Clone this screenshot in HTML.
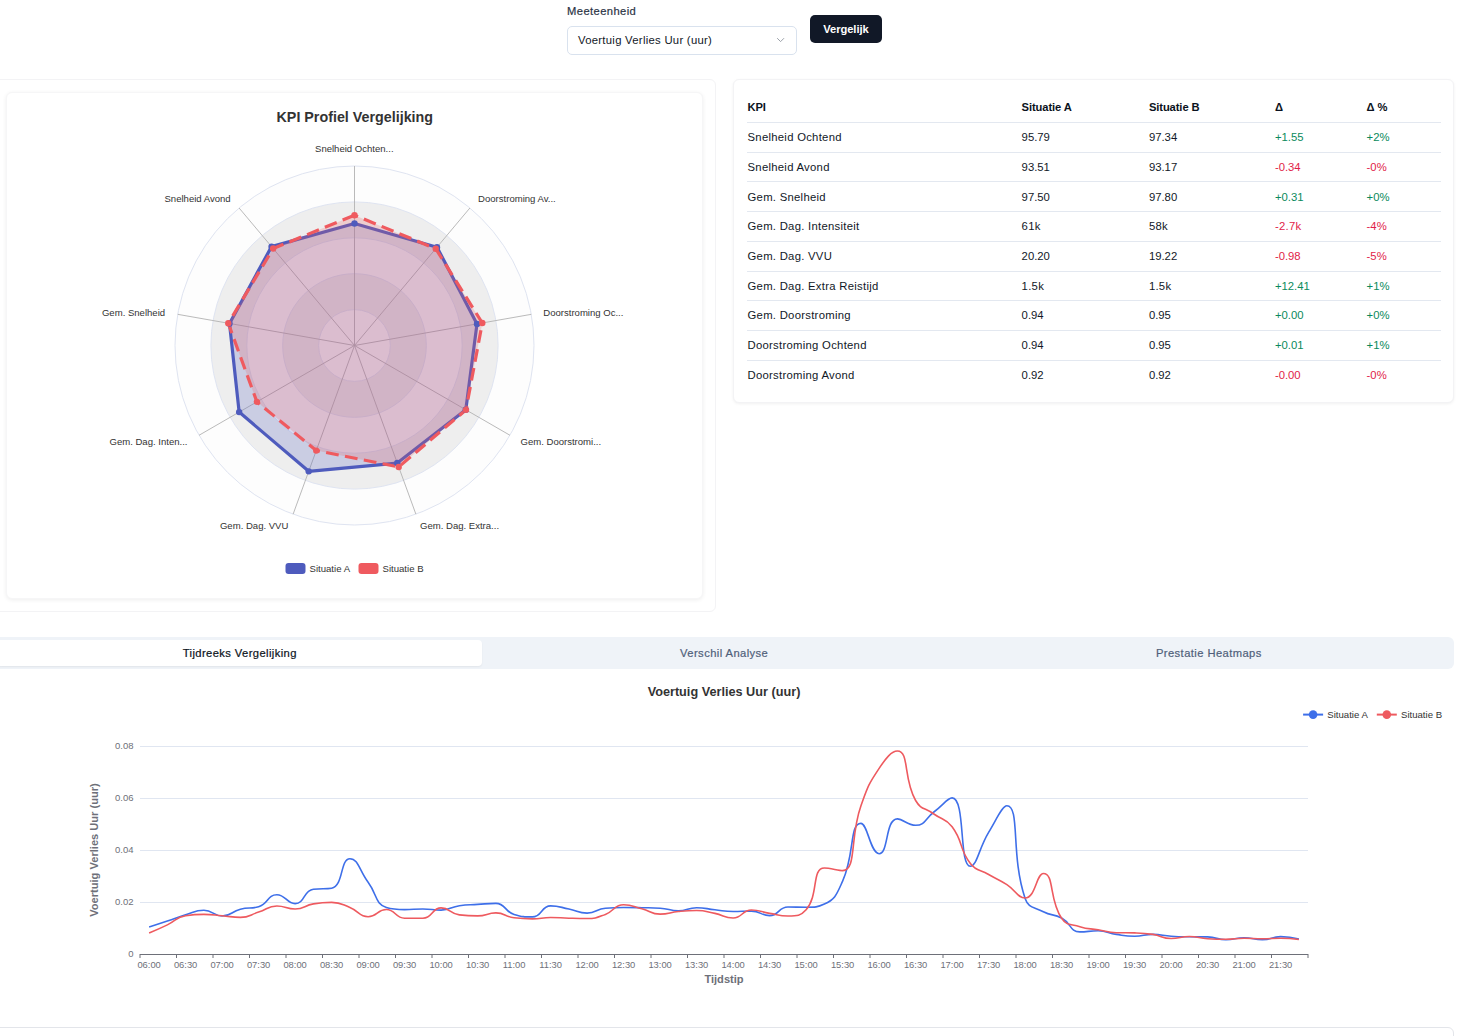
<!DOCTYPE html>
<html><head><meta charset="utf-8"><style>
html,body{margin:0;padding:0;}
body{width:1461px;height:1036px;overflow:hidden;position:relative;background:#fff;font-family:"Liberation Sans", sans-serif;}
.t{position:absolute;white-space:nowrap;line-height:1;}
svg text{font-family:"Liberation Sans", sans-serif;}
</style></head><body>
<div class="t" style="left:567.10px;top:6.02px;font-size:11.2px;color:#2b3445;font-weight:400;letter-spacing:0.4px;-webkit-text-stroke:0.2px #2b3445;">Meeteenheid</div>
<div style="position:absolute;left:567px;top:26px;width:230px;height:29px;box-sizing:border-box;border:1px solid #d9e2ee;border-radius:5px;background:#fff;"></div>
<div class="t" style="left:578.00px;top:34.93px;font-size:11.3px;color:#111827;font-weight:400;letter-spacing:0.28px;">Voertuig Verlies Uur (uur)</div>
<svg style="position:absolute;left:0;top:0" width="1461" height="60"><path d="M777.2 38.2 L780.6 41.6 L784 38.2" fill="none" stroke="#9aa0a8" stroke-width="1"/></svg>
<div style="position:absolute;left:810px;top:15px;width:72px;height:28px;box-sizing:border-box;background:#111827;border-radius:5px;"></div>
<div class="t" style="left:823.23px;top:24.12px;font-size:11.2px;color:#fff;font-weight:700;letter-spacing:-0.07px;">Vergelijk</div>
<div style="position:absolute;left:-6px;top:79px;width:722px;height:533px;box-sizing:border-box;border:1px solid #f3f3f5;border-radius:6px;background:#fff;"></div>
<div style="position:absolute;left:6px;top:92px;width:697px;height:507px;box-sizing:border-box;border:1px solid #f6f6f7;border-radius:6px;background:#fff;box-shadow:0 1px 4px rgba(0,0,0,0.07);"></div>
<div style="position:absolute;left:733px;top:79px;width:721px;height:324px;box-sizing:border-box;border:1px solid #f3f3f5;border-radius:6px;background:#fff;box-shadow:0 1px 3px rgba(0,0,0,0.06);"></div>
<div class="t" style="left:747.50px;top:102.22px;font-size:11.2px;color:#0b1220;font-weight:700;letter-spacing:-0.1px;">KPI</div>
<div class="t" style="left:1021.60px;top:102.22px;font-size:11.2px;color:#0b1220;font-weight:700;letter-spacing:-0.1px;">Situatie A</div>
<div class="t" style="left:1148.90px;top:102.22px;font-size:11.2px;color:#0b1220;font-weight:700;letter-spacing:-0.1px;">Situatie B</div>
<div class="t" style="left:1274.90px;top:102.22px;font-size:11.2px;color:#0b1220;font-weight:700;letter-spacing:-0.1px;">&Delta;</div>
<div class="t" style="left:1366.60px;top:102.22px;font-size:11.2px;color:#0b1220;font-weight:700;letter-spacing:-0.1px;">&Delta; %</div>
<div style="position:absolute;left:747px;top:122.00px;width:694px;height:1px;background:#e3e8f0"></div>
<div style="position:absolute;left:747px;top:151.74px;width:694px;height:1px;background:#e3e8f0"></div>
<div style="position:absolute;left:747px;top:181.48px;width:694px;height:1px;background:#e3e8f0"></div>
<div style="position:absolute;left:747px;top:211.22px;width:694px;height:1px;background:#e3e8f0"></div>
<div style="position:absolute;left:747px;top:240.96px;width:694px;height:1px;background:#e3e8f0"></div>
<div style="position:absolute;left:747px;top:270.70px;width:694px;height:1px;background:#e3e8f0"></div>
<div style="position:absolute;left:747px;top:300.44px;width:694px;height:1px;background:#e3e8f0"></div>
<div style="position:absolute;left:747px;top:330.18px;width:694px;height:1px;background:#e3e8f0"></div>
<div style="position:absolute;left:747px;top:359.92px;width:694px;height:1px;background:#e3e8f0"></div>
<div class="t" style="left:747.50px;top:132.03px;font-size:11.3px;color:#111827;font-weight:400;letter-spacing:0.28px;">Snelheid Ochtend</div>
<div class="t" style="left:1021.60px;top:132.03px;font-size:11.3px;color:#111827;font-weight:400;letter-spacing:0.0px;">95.79</div>
<div class="t" style="left:1148.90px;top:132.03px;font-size:11.3px;color:#111827;font-weight:400;letter-spacing:0.0px;">97.34</div>
<div class="t" style="left:1274.90px;top:132.03px;font-size:11.3px;color:#0a8a5c;font-weight:400;letter-spacing:0.0px;">+1.55</div>
<div class="t" style="left:1366.60px;top:132.03px;font-size:11.3px;color:#0a8a5c;font-weight:400;letter-spacing:0.0px;">+2%</div>
<div class="t" style="left:747.50px;top:161.77px;font-size:11.3px;color:#111827;font-weight:400;letter-spacing:0.28px;">Snelheid Avond</div>
<div class="t" style="left:1021.60px;top:161.77px;font-size:11.3px;color:#111827;font-weight:400;letter-spacing:0.0px;">93.51</div>
<div class="t" style="left:1148.90px;top:161.77px;font-size:11.3px;color:#111827;font-weight:400;letter-spacing:0.0px;">93.17</div>
<div class="t" style="left:1274.90px;top:161.77px;font-size:11.3px;color:#e11d48;font-weight:400;letter-spacing:0.0px;">-0.34</div>
<div class="t" style="left:1366.60px;top:161.77px;font-size:11.3px;color:#e11d48;font-weight:400;letter-spacing:0.0px;">-0%</div>
<div class="t" style="left:747.50px;top:191.51px;font-size:11.3px;color:#111827;font-weight:400;letter-spacing:0.28px;">Gem. Snelheid</div>
<div class="t" style="left:1021.60px;top:191.51px;font-size:11.3px;color:#111827;font-weight:400;letter-spacing:0.0px;">97.50</div>
<div class="t" style="left:1148.90px;top:191.51px;font-size:11.3px;color:#111827;font-weight:400;letter-spacing:0.0px;">97.80</div>
<div class="t" style="left:1274.90px;top:191.51px;font-size:11.3px;color:#0a8a5c;font-weight:400;letter-spacing:0.0px;">+0.31</div>
<div class="t" style="left:1366.60px;top:191.51px;font-size:11.3px;color:#0a8a5c;font-weight:400;letter-spacing:0.0px;">+0%</div>
<div class="t" style="left:747.50px;top:221.25px;font-size:11.3px;color:#111827;font-weight:400;letter-spacing:0.28px;">Gem. Dag. Intensiteit</div>
<div class="t" style="left:1021.60px;top:221.25px;font-size:11.3px;color:#111827;font-weight:400;letter-spacing:0.28px;">61k</div>
<div class="t" style="left:1148.90px;top:221.25px;font-size:11.3px;color:#111827;font-weight:400;letter-spacing:0.28px;">58k</div>
<div class="t" style="left:1274.90px;top:221.25px;font-size:11.3px;color:#e11d48;font-weight:400;letter-spacing:0.28px;">-2.7k</div>
<div class="t" style="left:1366.60px;top:221.25px;font-size:11.3px;color:#e11d48;font-weight:400;letter-spacing:0.0px;">-4%</div>
<div class="t" style="left:747.50px;top:250.99px;font-size:11.3px;color:#111827;font-weight:400;letter-spacing:0.28px;">Gem. Dag. VVU</div>
<div class="t" style="left:1021.60px;top:250.99px;font-size:11.3px;color:#111827;font-weight:400;letter-spacing:0.0px;">20.20</div>
<div class="t" style="left:1148.90px;top:250.99px;font-size:11.3px;color:#111827;font-weight:400;letter-spacing:0.0px;">19.22</div>
<div class="t" style="left:1274.90px;top:250.99px;font-size:11.3px;color:#e11d48;font-weight:400;letter-spacing:0.0px;">-0.98</div>
<div class="t" style="left:1366.60px;top:250.99px;font-size:11.3px;color:#e11d48;font-weight:400;letter-spacing:0.0px;">-5%</div>
<div class="t" style="left:747.50px;top:280.73px;font-size:11.3px;color:#111827;font-weight:400;letter-spacing:0.28px;">Gem. Dag. Extra Reistijd</div>
<div class="t" style="left:1021.60px;top:280.73px;font-size:11.3px;color:#111827;font-weight:400;letter-spacing:0.28px;">1.5k</div>
<div class="t" style="left:1148.90px;top:280.73px;font-size:11.3px;color:#111827;font-weight:400;letter-spacing:0.28px;">1.5k</div>
<div class="t" style="left:1274.90px;top:280.73px;font-size:11.3px;color:#0a8a5c;font-weight:400;letter-spacing:0.0px;">+12.41</div>
<div class="t" style="left:1366.60px;top:280.73px;font-size:11.3px;color:#0a8a5c;font-weight:400;letter-spacing:0.0px;">+1%</div>
<div class="t" style="left:747.50px;top:310.47px;font-size:11.3px;color:#111827;font-weight:400;letter-spacing:0.28px;">Gem. Doorstroming</div>
<div class="t" style="left:1021.60px;top:310.47px;font-size:11.3px;color:#111827;font-weight:400;letter-spacing:0.0px;">0.94</div>
<div class="t" style="left:1148.90px;top:310.47px;font-size:11.3px;color:#111827;font-weight:400;letter-spacing:0.0px;">0.95</div>
<div class="t" style="left:1274.90px;top:310.47px;font-size:11.3px;color:#0a8a5c;font-weight:400;letter-spacing:0.0px;">+0.00</div>
<div class="t" style="left:1366.60px;top:310.47px;font-size:11.3px;color:#0a8a5c;font-weight:400;letter-spacing:0.0px;">+0%</div>
<div class="t" style="left:747.50px;top:340.21px;font-size:11.3px;color:#111827;font-weight:400;letter-spacing:0.28px;">Doorstroming Ochtend</div>
<div class="t" style="left:1021.60px;top:340.21px;font-size:11.3px;color:#111827;font-weight:400;letter-spacing:0.0px;">0.94</div>
<div class="t" style="left:1148.90px;top:340.21px;font-size:11.3px;color:#111827;font-weight:400;letter-spacing:0.0px;">0.95</div>
<div class="t" style="left:1274.90px;top:340.21px;font-size:11.3px;color:#0a8a5c;font-weight:400;letter-spacing:0.0px;">+0.01</div>
<div class="t" style="left:1366.60px;top:340.21px;font-size:11.3px;color:#0a8a5c;font-weight:400;letter-spacing:0.0px;">+1%</div>
<div class="t" style="left:747.50px;top:369.95px;font-size:11.3px;color:#111827;font-weight:400;letter-spacing:0.28px;">Doorstroming Avond</div>
<div class="t" style="left:1021.60px;top:369.95px;font-size:11.3px;color:#111827;font-weight:400;letter-spacing:0.0px;">0.92</div>
<div class="t" style="left:1148.90px;top:369.95px;font-size:11.3px;color:#111827;font-weight:400;letter-spacing:0.0px;">0.92</div>
<div class="t" style="left:1274.90px;top:369.95px;font-size:11.3px;color:#e11d48;font-weight:400;letter-spacing:0.0px;">-0.00</div>
<div class="t" style="left:1366.60px;top:369.95px;font-size:11.3px;color:#e11d48;font-weight:400;letter-spacing:0.0px;">-0%</div>
<div style="position:absolute;left:-6px;top:637px;width:1460px;height:32px;box-sizing:border-box;background:#eff3f8;border-radius:6px;"></div>
<div style="position:absolute;left:-3px;top:640px;width:485px;height:26px;box-sizing:border-box;background:#fff;border-radius:4px;box-shadow:0 1px 2px rgba(0,0,0,0.06);"></div>
<div class="t" style="left:182.74px;top:648.22px;font-size:11.2px;color:#0b1220;font-weight:400;letter-spacing:0.4px;-webkit-text-stroke:0.2px #0b1220;">Tijdreeks Vergelijking</div>
<div class="t" style="left:680.07px;top:648.22px;font-size:11.2px;color:#4f5f7a;font-weight:400;letter-spacing:0.42px;-webkit-text-stroke:0.2px #4f5f7a;">Verschil Analyse</div>
<div class="t" style="left:1155.95px;top:648.22px;font-size:11.2px;color:#4f5f7a;font-weight:400;letter-spacing:0.42px;-webkit-text-stroke:0.2px #4f5f7a;">Prestatie Heatmaps</div>
<div style="position:absolute;left:-6px;top:1027px;width:1460px;height:73px;box-sizing:border-box;border:1px solid #e3e5ea;border-radius:6px;background:#fff;"></div>
<svg style="position:absolute;left:0;top:0" width="1461" height="1036">
<circle cx="354.5" cy="345.5" r="179.50" fill="#fdfdfd"/><circle cx="354.5" cy="345.5" r="143.60" fill="#eeeeee"/><circle cx="354.5" cy="345.5" r="107.70" fill="#fdfdfd"/><circle cx="354.5" cy="345.5" r="71.80" fill="#eeeeee"/><circle cx="354.5" cy="345.5" r="35.90" fill="#fdfdfd"/><circle cx="354.5" cy="345.5" r="35.90" fill="none" stroke="#dfe4f1" stroke-width="1"/><circle cx="354.5" cy="345.5" r="71.80" fill="none" stroke="#dfe4f1" stroke-width="1"/><circle cx="354.5" cy="345.5" r="107.70" fill="none" stroke="#dfe4f1" stroke-width="1"/><circle cx="354.5" cy="345.5" r="143.60" fill="none" stroke="#dfe4f1" stroke-width="1"/><circle cx="354.5" cy="345.5" r="179.50" fill="none" stroke="#dfe4f1" stroke-width="1"/><line x1="354.5" y1="345.5" x2="354.50" y2="166.00" stroke="#b2b2b2" stroke-width="0.9"/><line x1="354.5" y1="345.5" x2="239.12" y2="208.00" stroke="#b2b2b2" stroke-width="0.9"/><line x1="354.5" y1="345.5" x2="177.73" y2="314.33" stroke="#b2b2b2" stroke-width="0.9"/><line x1="354.5" y1="345.5" x2="199.05" y2="435.25" stroke="#b2b2b2" stroke-width="0.9"/><line x1="354.5" y1="345.5" x2="293.11" y2="514.17" stroke="#b2b2b2" stroke-width="0.9"/><line x1="354.5" y1="345.5" x2="415.89" y2="514.17" stroke="#b2b2b2" stroke-width="0.9"/><line x1="354.5" y1="345.5" x2="509.95" y2="435.25" stroke="#b2b2b2" stroke-width="0.9"/><line x1="354.5" y1="345.5" x2="531.27" y2="314.33" stroke="#b2b2b2" stroke-width="0.9"/><line x1="354.5" y1="345.5" x2="469.88" y2="208.00" stroke="#b2b2b2" stroke-width="0.9"/><polygon points="354.50,223.44 271.54,246.63 229.52,323.46 239.15,412.09 308.70,471.33 397.29,463.07 465.80,409.76 477.00,323.90 437.00,247.18" fill="#4e5bbd" fill-opacity="0.22" stroke="#4e5bbd" stroke-width="3.2" stroke-linejoin="round"/><polygon points="354.50,215.18 273.16,248.56 228.28,323.24 256.88,401.86 316.25,450.58 398.70,466.95 465.96,409.85 482.31,322.96 435.73,248.70" fill="#ef5a5f" fill-opacity="0.22" stroke="#ef5a5f" stroke-width="3.2" stroke-dasharray="12.8 6.4"/><circle cx="354.50" cy="223.44" r="3.2" fill="#4e5bbd"/><circle cx="271.54" cy="246.63" r="3.2" fill="#4e5bbd"/><circle cx="229.52" cy="323.46" r="3.2" fill="#4e5bbd"/><circle cx="239.15" cy="412.09" r="3.2" fill="#4e5bbd"/><circle cx="308.70" cy="471.33" r="3.2" fill="#4e5bbd"/><circle cx="397.29" cy="463.07" r="3.2" fill="#4e5bbd"/><circle cx="465.80" cy="409.76" r="3.2" fill="#4e5bbd"/><circle cx="477.00" cy="323.90" r="3.2" fill="#4e5bbd"/><circle cx="437.00" cy="247.18" r="3.2" fill="#4e5bbd"/><circle cx="354.50" cy="215.18" r="3.2" fill="#ef5a5f"/><circle cx="273.16" cy="248.56" r="3.2" fill="#ef5a5f"/><circle cx="228.28" cy="323.24" r="3.2" fill="#ef5a5f"/><circle cx="256.88" cy="401.86" r="3.2" fill="#ef5a5f"/><circle cx="316.25" cy="450.58" r="3.2" fill="#ef5a5f"/><circle cx="398.70" cy="466.95" r="3.2" fill="#ef5a5f"/><circle cx="465.96" cy="409.85" r="3.2" fill="#ef5a5f"/><circle cx="482.31" cy="322.96" r="3.2" fill="#ef5a5f"/><circle cx="435.73" cy="248.70" r="3.2" fill="#ef5a5f"/><text x="354.80" y="122.10" font-size="14.3" fill="#333" font-weight="700" text-anchor="middle" >KPI Profiel Vergelijking</text><text x="354.30" y="152.40" font-size="9.55" fill="#333" font-weight="400" text-anchor="middle" >Snelheid Ochten...</text><text x="230.70" y="202.00" font-size="9.55" fill="#333" font-weight="400" text-anchor="end" >Snelheid Avond</text><text x="165.10" y="315.70" font-size="9.55" fill="#333" font-weight="400" text-anchor="end" >Gem. Snelheid</text><text x="187.50" y="444.90" font-size="9.55" fill="#333" font-weight="400" text-anchor="end" >Gem. Dag. Inten...</text><text x="288.40" y="529.20" font-size="9.55" fill="#333" font-weight="400" text-anchor="end" >Gem. Dag. VVU</text><text x="420.00" y="529.20" font-size="9.55" fill="#333" font-weight="400" text-anchor="start" >Gem. Dag. Extra...</text><text x="520.50" y="444.90" font-size="9.55" fill="#333" font-weight="400" text-anchor="start" >Gem. Doorstromi...</text><text x="543.30" y="315.70" font-size="9.55" fill="#333" font-weight="400" text-anchor="start" >Doorstroming Oc...</text><text x="478.10" y="202.00" font-size="9.55" fill="#333" font-weight="400" text-anchor="start" >Doorstroming Av...</text><rect x="285.5" y="563" width="20" height="11" rx="3" fill="#4e5bbd"/><text x="309.50" y="572.00" font-size="9.6" fill="#333" font-weight="400" text-anchor="start" >Situatie A</text><rect x="358.5" y="563" width="20" height="11" rx="3" fill="#ef5a5f"/><text x="382.50" y="572.00" font-size="9.6" fill="#333" font-weight="400" text-anchor="start" >Situatie B</text>
<line x1="140.0" y1="902.5" x2="1308.0" y2="902.5" stroke="#e0e6f1" stroke-width="1"/><text x="133.5" y="905.40" font-size="9.5" fill="#6e7079" text-anchor="end">0.02</text><line x1="140.0" y1="850.5" x2="1308.0" y2="850.5" stroke="#e0e6f1" stroke-width="1"/><text x="133.5" y="853.40" font-size="9.5" fill="#6e7079" text-anchor="end">0.04</text><line x1="140.0" y1="798.5" x2="1308.0" y2="798.5" stroke="#e0e6f1" stroke-width="1"/><text x="133.5" y="801.40" font-size="9.5" fill="#6e7079" text-anchor="end">0.06</text><line x1="140.0" y1="746.5" x2="1308.0" y2="746.5" stroke="#e0e6f1" stroke-width="1"/><text x="133.5" y="749.40" font-size="9.5" fill="#6e7079" text-anchor="end">0.08</text><text x="133.5" y="957.40" font-size="9.5" fill="#6e7079" text-anchor="end">0</text><line x1="140.0" y1="954.5" x2="1308.0" y2="954.5" stroke="#6e7079" stroke-width="1"/><line x1="140.00" y1="954.0" x2="140.00" y2="958.0" stroke="#6e7079" stroke-width="1"/><line x1="176.50" y1="954.0" x2="176.50" y2="958.0" stroke="#6e7079" stroke-width="1"/><line x1="213.00" y1="954.0" x2="213.00" y2="958.0" stroke="#6e7079" stroke-width="1"/><line x1="249.50" y1="954.0" x2="249.50" y2="958.0" stroke="#6e7079" stroke-width="1"/><line x1="286.00" y1="954.0" x2="286.00" y2="958.0" stroke="#6e7079" stroke-width="1"/><line x1="322.50" y1="954.0" x2="322.50" y2="958.0" stroke="#6e7079" stroke-width="1"/><line x1="359.00" y1="954.0" x2="359.00" y2="958.0" stroke="#6e7079" stroke-width="1"/><line x1="395.50" y1="954.0" x2="395.50" y2="958.0" stroke="#6e7079" stroke-width="1"/><line x1="432.00" y1="954.0" x2="432.00" y2="958.0" stroke="#6e7079" stroke-width="1"/><line x1="468.50" y1="954.0" x2="468.50" y2="958.0" stroke="#6e7079" stroke-width="1"/><line x1="505.00" y1="954.0" x2="505.00" y2="958.0" stroke="#6e7079" stroke-width="1"/><line x1="541.50" y1="954.0" x2="541.50" y2="958.0" stroke="#6e7079" stroke-width="1"/><line x1="578.00" y1="954.0" x2="578.00" y2="958.0" stroke="#6e7079" stroke-width="1"/><line x1="614.50" y1="954.0" x2="614.50" y2="958.0" stroke="#6e7079" stroke-width="1"/><line x1="651.00" y1="954.0" x2="651.00" y2="958.0" stroke="#6e7079" stroke-width="1"/><line x1="687.50" y1="954.0" x2="687.50" y2="958.0" stroke="#6e7079" stroke-width="1"/><line x1="724.00" y1="954.0" x2="724.00" y2="958.0" stroke="#6e7079" stroke-width="1"/><line x1="760.50" y1="954.0" x2="760.50" y2="958.0" stroke="#6e7079" stroke-width="1"/><line x1="797.00" y1="954.0" x2="797.00" y2="958.0" stroke="#6e7079" stroke-width="1"/><line x1="833.50" y1="954.0" x2="833.50" y2="958.0" stroke="#6e7079" stroke-width="1"/><line x1="870.00" y1="954.0" x2="870.00" y2="958.0" stroke="#6e7079" stroke-width="1"/><line x1="906.50" y1="954.0" x2="906.50" y2="958.0" stroke="#6e7079" stroke-width="1"/><line x1="943.00" y1="954.0" x2="943.00" y2="958.0" stroke="#6e7079" stroke-width="1"/><line x1="979.50" y1="954.0" x2="979.50" y2="958.0" stroke="#6e7079" stroke-width="1"/><line x1="1016.00" y1="954.0" x2="1016.00" y2="958.0" stroke="#6e7079" stroke-width="1"/><line x1="1052.50" y1="954.0" x2="1052.50" y2="958.0" stroke="#6e7079" stroke-width="1"/><line x1="1089.00" y1="954.0" x2="1089.00" y2="958.0" stroke="#6e7079" stroke-width="1"/><line x1="1125.50" y1="954.0" x2="1125.50" y2="958.0" stroke="#6e7079" stroke-width="1"/><line x1="1162.00" y1="954.0" x2="1162.00" y2="958.0" stroke="#6e7079" stroke-width="1"/><line x1="1198.50" y1="954.0" x2="1198.50" y2="958.0" stroke="#6e7079" stroke-width="1"/><line x1="1235.00" y1="954.0" x2="1235.00" y2="958.0" stroke="#6e7079" stroke-width="1"/><line x1="1271.50" y1="954.0" x2="1271.50" y2="958.0" stroke="#6e7079" stroke-width="1"/><line x1="1308.00" y1="954.0" x2="1308.00" y2="958.0" stroke="#6e7079" stroke-width="1"/><text x="149.12" y="967.8" font-size="9.4" fill="#6e7079" text-anchor="middle">06:00</text><text x="185.62" y="967.8" font-size="9.4" fill="#6e7079" text-anchor="middle">06:30</text><text x="222.12" y="967.8" font-size="9.4" fill="#6e7079" text-anchor="middle">07:00</text><text x="258.62" y="967.8" font-size="9.4" fill="#6e7079" text-anchor="middle">07:30</text><text x="295.12" y="967.8" font-size="9.4" fill="#6e7079" text-anchor="middle">08:00</text><text x="331.62" y="967.8" font-size="9.4" fill="#6e7079" text-anchor="middle">08:30</text><text x="368.12" y="967.8" font-size="9.4" fill="#6e7079" text-anchor="middle">09:00</text><text x="404.62" y="967.8" font-size="9.4" fill="#6e7079" text-anchor="middle">09:30</text><text x="441.12" y="967.8" font-size="9.4" fill="#6e7079" text-anchor="middle">10:00</text><text x="477.62" y="967.8" font-size="9.4" fill="#6e7079" text-anchor="middle">10:30</text><text x="514.12" y="967.8" font-size="9.4" fill="#6e7079" text-anchor="middle">11:00</text><text x="550.62" y="967.8" font-size="9.4" fill="#6e7079" text-anchor="middle">11:30</text><text x="587.12" y="967.8" font-size="9.4" fill="#6e7079" text-anchor="middle">12:00</text><text x="623.62" y="967.8" font-size="9.4" fill="#6e7079" text-anchor="middle">12:30</text><text x="660.12" y="967.8" font-size="9.4" fill="#6e7079" text-anchor="middle">13:00</text><text x="696.62" y="967.8" font-size="9.4" fill="#6e7079" text-anchor="middle">13:30</text><text x="733.12" y="967.8" font-size="9.4" fill="#6e7079" text-anchor="middle">14:00</text><text x="769.62" y="967.8" font-size="9.4" fill="#6e7079" text-anchor="middle">14:30</text><text x="806.12" y="967.8" font-size="9.4" fill="#6e7079" text-anchor="middle">15:00</text><text x="842.62" y="967.8" font-size="9.4" fill="#6e7079" text-anchor="middle">15:30</text><text x="879.12" y="967.8" font-size="9.4" fill="#6e7079" text-anchor="middle">16:00</text><text x="915.62" y="967.8" font-size="9.4" fill="#6e7079" text-anchor="middle">16:30</text><text x="952.12" y="967.8" font-size="9.4" fill="#6e7079" text-anchor="middle">17:00</text><text x="988.62" y="967.8" font-size="9.4" fill="#6e7079" text-anchor="middle">17:30</text><text x="1025.12" y="967.8" font-size="9.4" fill="#6e7079" text-anchor="middle">18:00</text><text x="1061.62" y="967.8" font-size="9.4" fill="#6e7079" text-anchor="middle">18:30</text><text x="1098.12" y="967.8" font-size="9.4" fill="#6e7079" text-anchor="middle">19:00</text><text x="1134.62" y="967.8" font-size="9.4" fill="#6e7079" text-anchor="middle">19:30</text><text x="1171.12" y="967.8" font-size="9.4" fill="#6e7079" text-anchor="middle">20:00</text><text x="1207.62" y="967.8" font-size="9.4" fill="#6e7079" text-anchor="middle">20:30</text><text x="1244.12" y="967.8" font-size="9.4" fill="#6e7079" text-anchor="middle">21:00</text><text x="1280.62" y="967.8" font-size="9.4" fill="#6e7079" text-anchor="middle">21:30</text><path d="M149.12 927.00 C149.12 927.00 158.29 924.16 167.38 921.10 C176.54 918.01 176.36 917.44 185.62 914.70 C194.61 912.04 194.83 910.30 203.88 910.30 C213.08 910.30 213.08 916.00 222.12 916.00 C231.33 916.00 230.99 911.56 240.38 909.20 C249.24 906.96 250.29 909.20 258.62 906.80 C268.54 903.94 267.41 894.70 276.88 894.70 C285.66 894.70 286.62 903.60 295.12 903.60 C304.87 903.60 303.16 890.47 313.38 889.20 C321.41 888.20 325.33 889.20 331.62 888.20 C343.58 886.30 340.06 858.70 349.88 858.70 C358.31 858.70 359.19 870.36 368.12 882.30 C377.44 894.76 374.90 903.94 386.38 907.50 C393.15 909.60 395.47 909.60 404.62 909.60 C413.72 909.60 413.76 909.00 422.88 909.00 C432.01 909.00 432.12 910.10 441.12 910.10 C450.37 910.10 450.13 907.03 459.38 905.70 C468.38 904.40 468.50 904.98 477.62 904.40 C486.75 903.83 487.45 903.40 495.88 903.40 C505.70 903.40 504.34 911.51 514.12 914.40 C522.59 916.90 523.91 916.90 532.38 916.90 C542.16 916.90 540.86 905.90 550.62 905.90 C559.11 905.90 559.80 907.21 568.88 909.00 C578.05 910.81 578.05 913.10 587.12 913.10 C596.30 913.10 596.09 908.92 605.38 908.20 C614.34 907.50 614.50 907.50 623.62 907.50 C632.75 907.50 632.75 907.53 641.88 907.70 C651.00 907.88 651.04 907.70 660.12 908.20 C669.29 908.70 669.27 910.80 678.38 910.80 C687.52 910.80 687.47 907.70 696.62 907.70 C705.72 907.70 705.74 908.85 714.88 909.80 C723.99 910.75 723.98 911.50 733.12 911.50 C742.23 911.50 742.38 911.10 751.38 911.10 C760.63 911.10 760.82 915.60 769.62 915.60 C779.07 915.60 778.29 907.00 787.88 907.00 C796.54 907.00 797.07 907.30 806.12 907.30 C815.32 907.30 817.30 907.30 824.38 904.10 C835.55 899.04 836.68 894.34 842.62 881.20 C854.93 853.99 849.35 823.40 860.88 823.40 C867.60 823.40 870.48 853.70 879.12 853.70 C888.73 853.70 885.14 818.90 897.38 818.90 C903.39 818.90 907.21 825.30 915.62 825.30 C925.46 825.30 924.85 818.78 933.88 812.00 C943.10 805.08 947.64 797.90 952.12 797.90 C965.89 797.90 958.55 866.30 970.38 866.30 C976.80 866.30 978.70 848.86 988.62 832.40 C996.95 818.61 1002.23 805.80 1006.88 805.80 C1020.48 805.80 1010.41 855.65 1025.12 898.40 C1028.66 908.65 1033.52 906.51 1043.38 911.80 C1051.77 916.31 1053.29 913.41 1061.62 918.00 C1071.54 923.46 1069.72 931.90 1079.88 931.90 C1087.97 931.90 1089.08 930.80 1098.12 930.80 C1107.33 930.80 1107.19 933.04 1116.38 934.40 C1125.44 935.74 1125.50 936.20 1134.62 936.20 C1143.75 936.20 1143.75 934.40 1152.88 934.40 C1162.00 934.40 1161.98 935.60 1171.12 936.20 C1180.23 936.80 1180.25 936.70 1189.38 936.80 C1198.50 936.90 1198.56 936.80 1207.62 936.90 C1216.81 937.00 1216.72 939.80 1225.88 939.80 C1234.97 939.80 1235.00 937.80 1244.12 937.80 C1253.25 937.80 1253.29 939.80 1262.38 939.80 C1271.54 939.80 1271.47 936.60 1280.62 936.60 C1289.72 936.60 1298.88 939.10 1298.88 939.10" fill="none" stroke="#3e6fe9" stroke-width="1.6" stroke-linejoin="round"/><path d="M149.12 933.10 C149.12 933.10 158.35 929.20 167.38 924.90 C176.60 920.50 176.00 917.15 185.62 915.70 C194.25 914.40 194.75 914.40 203.88 914.40 C213.00 914.40 213.01 914.95 222.12 915.70 C231.26 916.45 231.41 917.40 240.38 917.40 C249.66 917.40 249.56 914.93 258.62 912.10 C267.81 909.23 267.57 906.00 276.88 906.00 C285.82 906.00 286.11 909.00 295.12 909.00 C304.36 909.00 304.09 905.45 313.38 903.90 C322.34 902.40 322.66 902.40 331.62 902.40 C340.91 902.40 341.09 904.06 349.88 907.50 C359.34 911.21 358.81 916.70 368.12 916.70 C377.06 916.70 377.39 909.50 386.38 909.50 C395.64 909.50 395.03 918.20 404.62 918.20 C413.28 918.20 414.38 918.20 422.88 918.20 C432.63 918.20 431.68 907.90 441.12 907.90 C449.93 907.90 449.94 913.83 459.38 914.90 C468.19 915.90 468.55 915.90 477.62 915.90 C486.80 915.90 486.85 912.90 495.88 912.90 C505.10 912.90 504.85 916.66 514.12 917.80 C523.10 918.90 523.26 918.90 532.38 918.90 C541.51 918.90 541.49 917.50 550.62 917.50 C559.74 917.50 559.75 917.95 568.88 918.20 C578.00 918.45 578.11 918.50 587.12 918.50 C596.36 918.50 596.69 917.66 605.38 914.40 C614.94 910.81 614.04 904.80 623.62 904.80 C632.29 904.80 632.84 906.40 641.88 908.70 C651.09 911.05 650.85 914.10 660.12 914.10 C669.10 914.10 669.21 912.40 678.38 911.50 C687.46 910.60 687.55 910.50 696.62 910.50 C705.80 910.50 705.83 911.54 714.88 913.40 C724.08 915.29 724.26 918.00 733.12 918.00 C742.51 918.00 741.93 910.00 751.38 910.00 C760.18 910.00 760.47 911.89 769.62 913.40 C778.72 914.89 778.95 916.00 787.88 916.00 C797.20 916.00 800.70 916.00 806.12 909.80 C818.95 895.13 811.38 868.00 824.38 868.00 C829.63 868.00 838.69 870.60 842.62 870.60 C856.94 870.60 849.63 837.49 860.88 806.00 C867.88 786.39 867.74 785.55 879.12 768.40 C885.99 758.05 891.47 751.00 897.38 751.00 C909.72 751.00 902.87 778.48 915.62 800.50 C921.12 809.98 924.67 807.37 933.88 814.00 C942.92 820.52 945.70 818.08 952.12 826.80 C963.95 842.83 958.37 847.81 970.38 863.50 C976.62 871.66 979.40 869.17 988.62 874.50 C997.65 879.72 998.12 878.97 1006.88 884.60 C1016.37 890.72 1017.36 898.00 1025.12 898.00 C1035.61 898.00 1036.31 873.50 1043.38 873.50 C1054.56 873.50 1048.73 899.51 1061.62 918.30 C1066.98 926.11 1070.38 923.71 1079.88 926.70 C1088.63 929.46 1088.99 928.30 1098.12 929.80 C1107.24 931.30 1107.19 932.50 1116.38 932.70 C1125.44 932.90 1125.52 932.70 1134.62 932.90 C1143.77 933.10 1143.85 933.01 1152.88 934.40 C1162.10 935.81 1161.91 938.50 1171.12 938.50 C1180.16 938.50 1180.26 936.50 1189.38 936.50 C1198.51 936.50 1198.47 938.30 1207.62 938.80 C1216.72 939.30 1216.76 939.30 1225.88 939.30 C1235.01 939.30 1234.99 938.30 1244.12 938.30 C1253.24 938.30 1253.25 938.80 1262.38 938.80 C1271.50 938.80 1271.51 938.30 1280.62 938.30 C1289.76 938.30 1298.88 939.50 1298.88 939.50" fill="none" stroke="#ee5a5f" stroke-width="1.6" stroke-linejoin="round"/><text x="724" y="696.1" font-size="12.7" font-weight="700" fill="#333" text-anchor="middle">Voertuig Verlies Uur (uur)</text><text x="724" y="983" font-size="11.1" font-weight="700" fill="#6e7079" text-anchor="middle">Tijdstip</text><text transform="translate(98.2,850) rotate(-90)" x="0" y="0" font-size="11.1" font-weight="700" fill="#6e7079" text-anchor="middle">Voertuig Verlies Uur (uur)</text><line x1="1303.1" y1="714.6" x2="1323.1" y2="714.6" stroke="#3e6fe9" stroke-width="2"/><circle cx="1313.1" cy="714.6" r="4.3" fill="#3e6fe9"/><text x="1327.3" y="717.8" font-size="9.6" fill="#333">Situatie A</text><line x1="1376.8" y1="714.6" x2="1396.8" y2="714.6" stroke="#ee5a5f" stroke-width="2"/><circle cx="1386.8" cy="714.6" r="4.3" fill="#ee5a5f"/><text x="1401.0" y="717.8" font-size="9.6" fill="#333">Situatie B</text>
</svg>
</body></html>
